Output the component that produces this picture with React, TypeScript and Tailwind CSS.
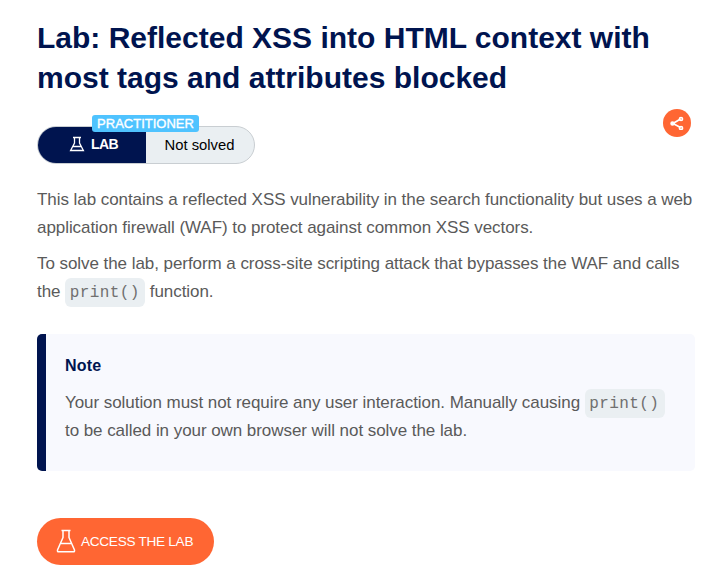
import type { ReactNode } from "react";

function Code({ children }: { children: ReactNode }) {
  return (
    <code className="rounded-[6px] bg-[#eaeff2] pt-[6px] pr-[5.5px] pb-[5px] pl-[4.5px] font-['Liberation_Mono',monospace] text-base tracking-[0.4px] text-[#707070]">
      {children}
    </code>
  );
}

export default function App() {
  return (
    <main className="h-[568px] overflow-hidden bg-white pt-[18px] pr-3 pl-[37px] font-['Liberation_Sans',Arial,sans-serif] text-[17px] leading-7 tracking-[-0.059px] text-[#5a5a5a]">
      <h1 className="text-[30px] leading-10 font-bold tracking-normal whitespace-nowrap text-[#00144f]">
        Lab: Reflected XSS into HTML context with
        <br />
        most tags and attributes blocked
      </h1>

      <div className="mt-[11px] flex items-start justify-between pr-1 tracking-normal">
        <div className="relative mt-[17px] flex h-[38px] w-[218px] rounded-full border border-[#c9ced2] bg-[#eaeff2]">
          <div className="flex w-[108px] items-center rounded-l-full bg-[#00144f] pb-[2px] pl-[31px] text-[14px] font-bold tracking-[-0.6px] text-white">
            <svg viewBox="0 0 16 16" className="mr-[6px] size-4 shrink-0" fill="none" stroke="currentColor" strokeWidth="1.300" aria-hidden="true">
              <path d="M4 1.500h8M5.500 1.500v5.500L1.600 14.500h12.800L10.500 7V1.500M4 10.500h8" />
            </svg>
            LAB
          </div>
          <div className="flex flex-1 items-center justify-center pr-px text-[14.8px] text-black">Not solved</div>
          <span className="absolute -top-[12px] left-[54px] flex h-[17px] w-[107px] items-center justify-center rounded-[3px] bg-[#4fc3ff] text-[13px] leading-none text-white [-webkit-text-stroke:0.35px_white]">
            PRACTITIONER
          </span>
        </div>
        <button aria-label="Share" className="flex size-7 items-center justify-center rounded-full bg-[#ff6633] text-white">
          <svg viewBox="0 0 14 14" className="size-[14px]" fill="none" stroke="currentColor" strokeWidth="1.700">
            <path d="M10.500 3 3 7.500l7.500 4" />
            <circle cx="11" cy="3" r="1.500" />
            <circle cx="2.500" cy="7.500" r="1.400" />
            <circle cx="11" cy="12" r="1.500" />
          </svg>
        </button>
      </div>

      <p className="mt-[22px] whitespace-nowrap">
        This lab contains a reflected XSS vulnerability in the search functionality but uses a web
        <br />
        application firewall (WAF) to protect against common XSS vectors.
      </p>
      <p className="mt-2 whitespace-nowrap">
        To solve the lab, perform a cross-site scripting attack that bypasses the WAF and calls
        <br />
        the <Code>print()</Code> function.
      </p>

      <section className="mt-[28px] h-[137px] rounded-[5px] border-l-[9px] border-[#00144f] bg-[#f8f9fe] pt-[18px] pl-[19px]">
        <h2 className="text-base leading-7 font-bold tracking-[0.2px] text-[#00144f]">Note</h2>
        <p className="mt-[9px] whitespace-nowrap">
          Your solution must not require any user interaction. Manually causing <Code>print()</Code>
          <br />
          to be called in your own browser will not solve the lab.
        </p>
      </section>

      <button className="mt-[47px] flex h-[47px] w-[177px] items-center rounded-full bg-[#ff6633] pl-[19px] text-[13.600px] tracking-[-0.28px] whitespace-nowrap text-white">
        <svg viewBox="0 0 20 24" className="mr-[5px] mb-[2px] h-[24px] w-[20px] shrink-0" fill="none" stroke="currentColor" strokeWidth="1.500" strokeLinejoin="round" aria-hidden="true">
          <path d="M5.500 1.500h9M7 1.500v7L1.600 20.800Q1 22.800 2.700 22.800h14.600q1.700 0 1.100-2L13 8.500v-7M5 14.500h10" />
        </svg>
        ACCESS THE LAB
      </button>
    </main>
  );
}
